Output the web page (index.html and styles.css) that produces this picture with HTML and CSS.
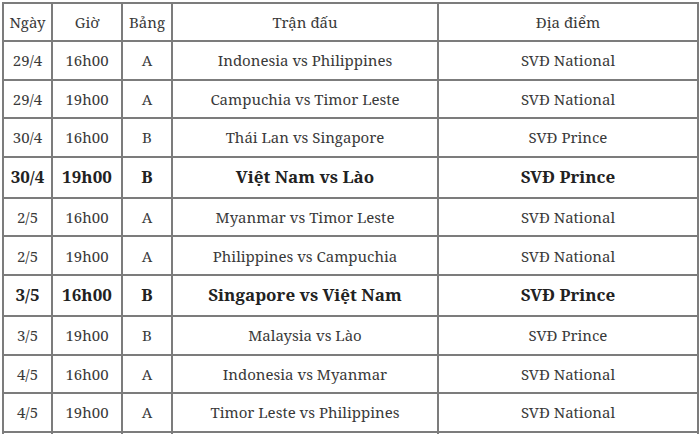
FILE: index.html
```html
<!DOCTYPE html>
<html lang="vi">
<head>
<meta charset="utf-8">
<link rel="stylesheet" href="styles.css">
</head>
<body>
<table class="schedule">
  <colgroup>
    <col class="c-date"><col class="c-time"><col class="c-group"><col class="c-match"><col class="c-venue">
  </colgroup>
  <tr class="head"><td>Ngày</td><td>Giờ</td><td>Bảng</td><td>Trận đấu</td><td>Địa điểm</td></tr>
  <tr><td>29/4</td><td>16h00</td><td>A</td><td>Indonesia vs Philippines</td><td>SVĐ National</td></tr>
  <tr><td>29/4</td><td>19h00</td><td>A</td><td>Campuchia vs Timor Leste</td><td>SVĐ National</td></tr>
  <tr><td>30/4</td><td>16h00</td><td>B</td><td>Thái Lan vs Singapore</td><td>SVĐ Prince</td></tr>
  <tr class="hl"><td>30/4</td><td>19h00</td><td>B</td><td>Việt Nam vs Lào</td><td>SVĐ Prince</td></tr>
  <tr><td>2/5</td><td>16h00</td><td>A</td><td>Myanmar vs Timor Leste</td><td>SVĐ National</td></tr>
  <tr><td>2/5</td><td>19h00</td><td>A</td><td>Philippines vs Campuchia</td><td>SVĐ National</td></tr>
  <tr class="hl"><td>3/5</td><td>16h00</td><td>B</td><td>Singapore vs Việt Nam</td><td>SVĐ Prince</td></tr>
  <tr><td>3/5</td><td>19h00</td><td>B</td><td>Malaysia vs Lào</td><td>SVĐ Prince</td></tr>
  <tr><td>4/5</td><td>16h00</td><td>A</td><td>Indonesia vs Myanmar</td><td>SVĐ National</td></tr>
  <tr><td>4/5</td><td>19h00</td><td>A</td><td>Timor Leste vs Philippines</td><td>SVĐ National</td></tr>
  <tr class="tail"><td></td><td></td><td></td><td></td><td></td></tr>
</table>
</body>
</html>
```
FILE: styles.css
```css
html, body {
  margin: 0;
  padding: 0;
  background: #fff;
  overflow: hidden;
  height: 434px;
}
body {
  padding: 2px 0 0 2px;
  box-sizing: border-box;
  font-family: "Noto Serif", "DejaVu Serif", "Liberation Serif", serif;
  color: #3a3a3a;
}
.schedule {
  border-collapse: collapse;
  table-layout: fixed;
  width: 697px;
}
.c-date { width: 49px; }
.c-time { width: 70px; }
.c-group { width: 50px; }
.c-match { width: 266px; }
.c-venue { width: 260px; }
.schedule td {
  border: 2px solid #7c7c7c;
  text-align: center;
  vertical-align: middle;
  padding: 0;
  font-size: 15px;
  line-height: 20px;
  white-space: nowrap;
}
.schedule tr { height: 38.6px; }
.schedule tr.head { height: 38px; }
.schedule tr.hl { height: 41px; }
.schedule tr.tail { height: 20px; }
.schedule tr.hl td {
  font-weight: bold;
  font-size: 17px;
  color: #222;
}
```
